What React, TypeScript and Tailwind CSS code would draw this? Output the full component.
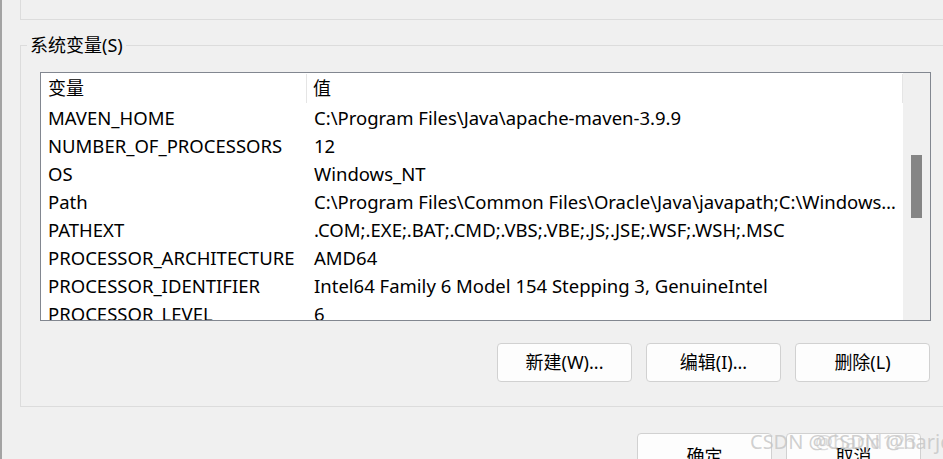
import React from "react";

const rows: [string, string][] = [
  ["MAVEN_HOME", "C:\\Program Files\\Java\\apache-maven-3.9.9"],
  ["NUMBER_OF_PROCESSORS", "12"],
  ["OS", "Windows_NT"],
  ["Path", "C:\\Program Files\\Common Files\\Oracle\\Java\\javapath;C:\\Windows\\system32;C:\\Windows"],
  ["PATHEXT", ".COM;.EXE;.BAT;.CMD;.VBS;.VBE;.JS;.JSE;.WSF;.WSH;.MSC"],
  ["PROCESSOR_ARCHITECTURE", "AMD64"],
  ["PROCESSOR_IDENTIFIER", "Intel64 Family 6 Model 154 Stepping 3, GenuineIntel"],
  ["PROCESSOR_LEVEL", "6"],
];

function WinButton({ label, top }: { label: string; top?: boolean }) {
  return (
    <button
      className={
        "w-[135px] h-[39px] shrink-0 rounded-[4px] border border-[#d1d1d1] bg-[#fdfdfd] text-[18px] text-black" +
        (top ? " pt-[8px]" : "")
      }
    >
      {label}
    </button>
  );
}

export default function App() {
  return (
    <div
      className="relative w-[943px] h-[459px] overflow-hidden bg-[#f0f0f0] flex"
      style={{ fontFamily: '"Noto Sans", "Noto Sans CJK SC", sans-serif' }}
    >
      {/* window edge */}
      <div className="w-[2px] shrink-0 bg-[#a3a3a3]" />

      <div className="flex-1 flex flex-col pl-[18px]">
        {/* user variables group (bottom part only) */}
        <div className="h-[20px] shrink-0 mr-[-10px] border-l border-b border-[#dcdcdc]" />

        {/* system variables group */}
        <div className="relative shrink-0 mt-[25px] h-[362px] mr-[-10px] border-l border-t border-b border-[#dcdcdc] pl-[19px] pt-[26px]">
          <span className="absolute left-[6px] top-[-12px] bg-[#f0f0f0] px-[3px] text-[18px] leading-[22px] text-black">
            系统变量(S)
          </span>

          {/* list view */}
          <div className="w-[891px] h-[249px] border border-[#828790] bg-white flex overflow-hidden">
            <div className="flex-1 min-w-0 flex flex-col">
              <div className="h-[31px] shrink-0 flex items-stretch text-[18px] text-black">
                <div className="w-[266px] pl-[7px] flex items-center border-r border-[#e5e5e5] my-[1px]">变量</div>
                <div className="flex-1 pl-[6px] flex items-center border-r border-[#e5e5e5] my-[1px]">值</div>
              </div>
              {rows.map(([name, value]) => (
                <div key={name} className="h-[28px] shrink-0 flex items-center text-[18.5px] text-black">
                  <div className="w-[266px] pl-[7px] whitespace-nowrap overflow-hidden">{name}</div>
                  <div className="flex-1 min-w-0 pl-[7px] pr-[6px] truncate">{value}</div>
                </div>
              ))}
            </div>
            {/* scrollbar */}
            <div className="w-[27px] shrink-0 bg-[#f0f0f0] flex justify-center pt-[82px]">
              <div className="w-[11px] h-[63px] bg-[#858585]" />
            </div>
          </div>

          <div className="flex gap-[14px] mt-[22px] pl-[457px]">
            <WinButton label="新建(W)..." />
            <WinButton label="编辑(I)..." />
            <WinButton label="删除(L)" />
          </div>
        </div>

        {/* dialog buttons */}
        <div className="flex shrink-0 gap-[14px] mt-[26px] pl-[617px]">
          <WinButton label="确定" top />
          <WinButton label="取消" top />
        </div>
      </div>

      {/* watermark */}
      <span className="absolute left-[750px] top-[430px] text-[20px] leading-[24px] text-[#c4c4c4]/80 whitespace-nowrap pointer-events-none">
        CSDN @CSDN @harjd123
      </span>
      <span className="absolute left-[815px] top-[430px] text-[20px] leading-[24px] text-[#c4c4c4]/60 whitespace-nowrap pointer-events-none">
        @harjd123
      </span>
    </div>
  );
}
